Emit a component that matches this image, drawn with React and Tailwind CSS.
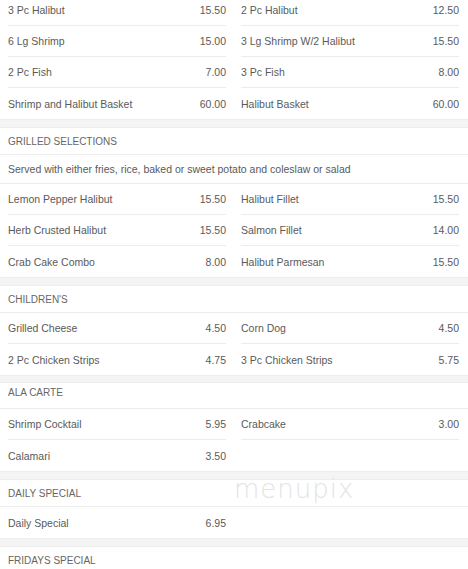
import React from "react";

// --- Menu data ---
const sections = [
  {
    title: null,
    items: [
      ["3 Pc Halibut", "15.50", "2 Pc Halibut", "12.50"],
      ["6 Lg Shrimp", "15.00", "3 Lg Shrimp W/2 Halibut", "15.50"],
      ["2 Pc Fish", "7.00", "3 Pc Fish", "8.00"],
      ["Shrimp and Halibut Basket", "60.00", "Halibut Basket", "60.00"],
    ],
  },
  {
    title: "GRILLED SELECTIONS",
    note: "Served with either fries, rice, baked or sweet potato and coleslaw or salad",
    items: [
      ["Lemon Pepper Halibut", "15.50", "Halibut Fillet", "15.50"],
      ["Herb Crusted Halibut", "15.50", "Salmon Fillet", "14.00"],
      ["Crab Cake Combo", "8.00", "Halibut Parmesan", "15.50"],
    ],
  },
  {
    title: "CHILDREN'S",
    items: [
      ["Grilled Cheese", "4.50", "Corn Dog", "4.50"],
      ["2 Pc Chicken Strips", "4.75", "3 Pc Chicken Strips", "5.75"],
    ],
  },
  {
    title: "ALA CARTE",
    tight: true,
    items: [
      ["Shrimp Cocktail", "5.95", "Crabcake", "3.00"],
      ["Calamari", "3.50", null, null],
    ],
  },
  {
    title: "DAILY SPECIAL",
    items: [["Daily Special", "6.95", null, null]],
  },
  {
    title: "FRIDAYS SPECIAL",
    items: [],
  },
];

const Item = ({ name, price, last }) => (
  <div
    className={`flex items-center justify-between h-[31px] pt-[2px] ${
      last ? "" : "border-b border-[#ececec]"
    }`}
  >
    {name && <span>{name}</span>}
    {price && <span>{price}</span>}
  </div>
);

const Section = ({ section, first }) => (
  <div>
    {!first && (
      <div
        className={`bg-[#f4f4f4] border-y border-[#ededed] ${
          section.tight ? "h-[8px]" : "h-[9px]"
        }`}
      />
    )}
    {section.title && (
      <div
        className={`flex items-center px-2 text-[10px] text-[#666] border-b border-[#ececec] ${
          section.tight ? "h-[26px] pb-[6px]" : "h-[27px]"
        }`}
      >
        {section.title}
      </div>
    )}
    {section.note && (
      <div className="h-[29px] flex items-center pt-[1px] px-2 border-b border-[#ececec]">
        {section.note}
      </div>
    )}
    {section.items.length > 0 && (
      <div className="grid grid-cols-2 gap-x-[15px] pl-2 pr-[9px]">
        {section.items.map((row, i) => {
          const last = i === section.items.length - 1;
          return (
            <React.Fragment key={i}>
              <Item name={row[0]} price={row[1]} last={last} />
              <Item name={row[2]} price={row[3]} last={last || !row[2]} />
            </React.Fragment>
          );
        })}
      </div>
    )}
  </div>
);

const App = () => (
  <div className="relative w-[468px] h-[569px] overflow-hidden bg-white text-[10.5px] text-[#5a5a5a] font-['Liberation_Sans',Arial,sans-serif]">
    <div className="-mt-[5px]">
      {sections.map((s, i) => (
        <Section key={i} section={s} first={i === 0} />
      ))}
    </div>
    {/* watermark */}
    <div className="absolute left-[234px] top-[470px] text-[26px] font-light tracking-[1px] text-[#e4e4e4] font-['DejaVu_Sans',sans-serif] pointer-events-none">
      menupix
    </div>
  </div>
);

export default App;
